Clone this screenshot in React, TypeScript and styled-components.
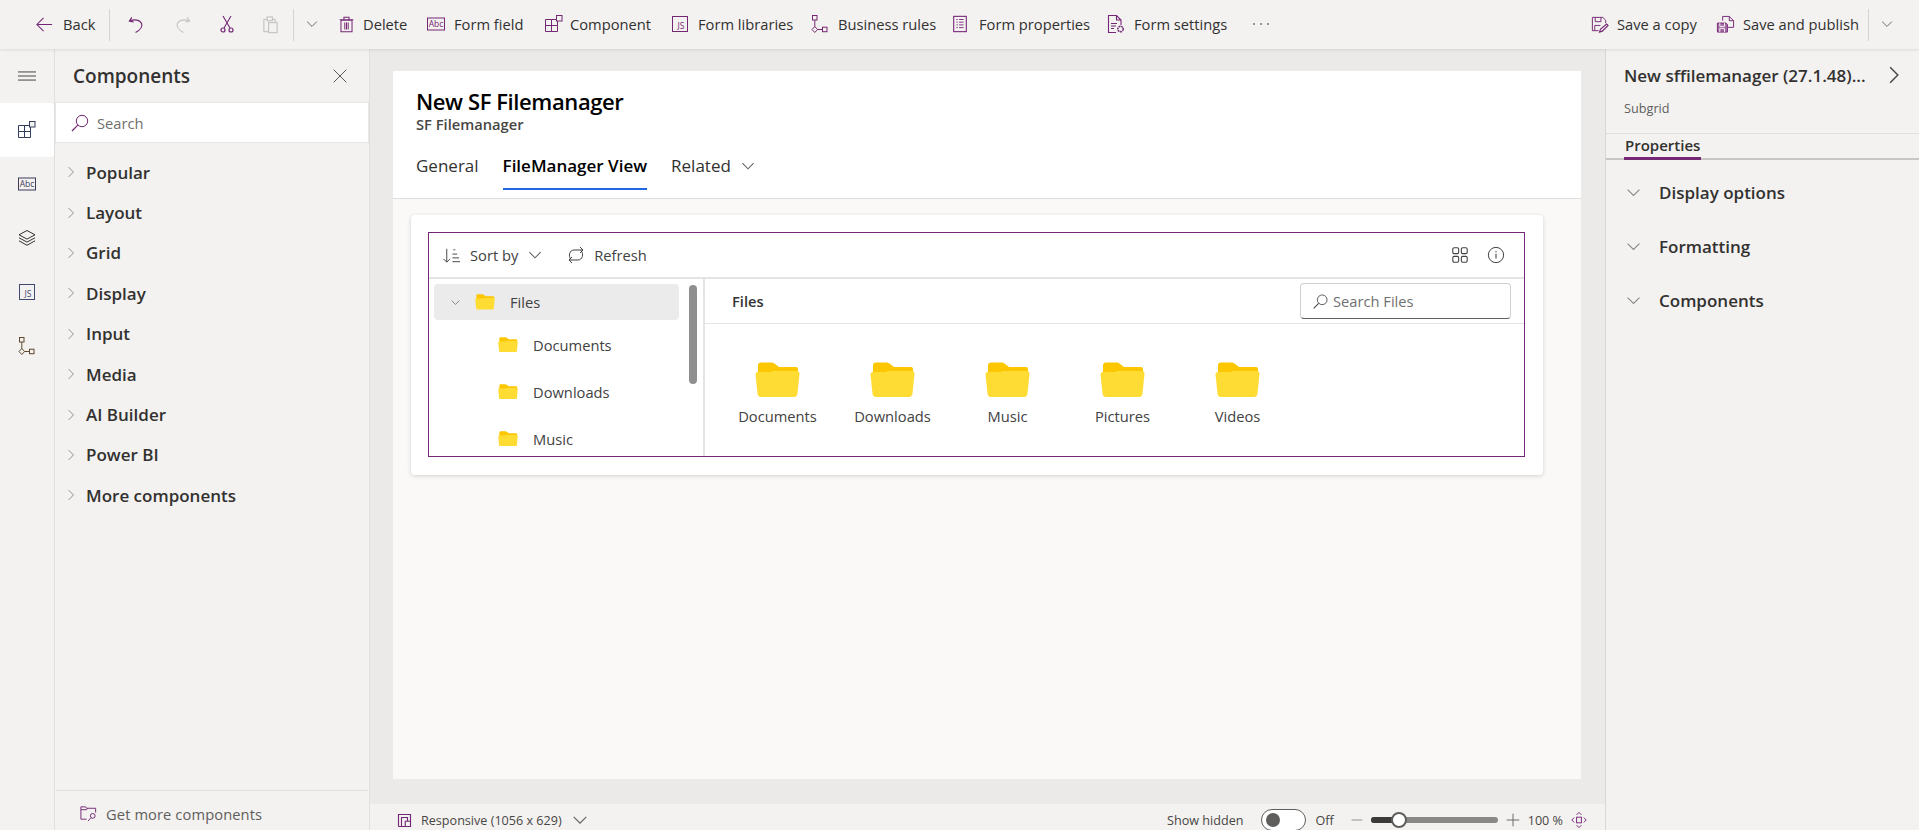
import styled, { createGlobalStyle } from 'styled-components';
import type { ReactNode } from 'react';

const PURPLE = '#742774';
const INK = '#323130';

const GlobalStyle = createGlobalStyle`
  html, body {
    margin: 0;
    padding: 0;
    overflow: hidden;
    background: #f3f2f1;
  }
  * {
    box-sizing: border-box;
  }
  body {
    font-family: 'Open Sans', 'Noto Sans', 'Liberation Sans', sans-serif;
    color: ${INK};
  }
`;

const Page = styled.div`
  display: flex;
  flex-direction: column;
  width: 1919px;
  height: 830px;
  overflow: hidden;
`;

const TopBar = styled.header`
  position: relative;
  z-index: 2;
  display: flex;
  align-items: center;
  flex: 0 0 49px;
  height: 49px;
  background: #f3f2f1;
  box-shadow: 0 1px 3px rgba(0, 0, 0, 0.1);
`;

const ToolGroup = styled.div`
  display: flex;
  align-items: center;
  height: 100%;
`;

const Tool = styled.div<{ $w: number; $pad: number; $gap: number }>`
  display: flex;
  align-items: center;
  flex: 0 0 ${p => p.$w}px;
  width: ${p => p.$w}px;
  height: 100%;
  padding: 0 0 1px ${p => p.$pad}px;
  gap: ${p => p.$gap}px;
  font-size: 14.7px;
  white-space: nowrap;
  color: ${INK};
`;

const ToolSeparator = styled.span`
  flex: 0 0 1px;
  width: 1px;
  height: 32px;
  background: #d6d4d2;
`;

const Dots = styled.span`
  display: flex;
  gap: 5px;
  i {
    width: 2px;
    height: 2px;
    border-radius: 50%;
    background: #797775;
  }
`;

const Spacer = styled.div`
  flex: 1;
`;

const Body = styled.div`
  display: flex;
  flex: 1;
  min-height: 0;
`;

const Rail = styled.nav`
  display: flex;
  flex-direction: column;
  flex: 0 0 55px;
  width: 55px;
  border-right: 1px solid #e1dfdd;
`;

const RailButton = styled.div<{ $active?: boolean }>`
  display: flex;
  align-items: center;
  justify-content: center;
  width: 54px;
  height: 54px;
  border-radius: 0 4px 4px 0;
  background: ${p => (p.$active ? '#fff' : 'transparent')};
`;

const ComponentsPanel = styled.aside`
  display: flex;
  flex-direction: column;
  flex: 0 0 315px;
  width: 315px;
  border-right: 1px solid #e1dfdd;
`;

const PanelHead = styled.div`
  display: flex;
  align-items: center;
  justify-content: space-between;
  height: 54px;
  padding: 0 21px 0 18px;
  font-size: 19px;
  font-weight: 600;
`;

const PanelSearch = styled.div`
  display: flex;
  align-items: center;
  gap: 7px;
  height: 39px;
  margin: 0 1px;
  padding-left: 14px;
  background: #fff;
  box-shadow: 0 0 0 1px #e8e6e4;
  font-size: 14.7px;
  color: #6f6e6d;
`;

const SectionList = styled.div`
  flex: 1;
  padding-top: 10px;
`;

const SectionRow = styled.div`
  display: flex;
  align-items: center;
  gap: 8px;
  height: 40.4px;
  padding-left: 9px;
  font-size: 17px;
  font-weight: 600;
`;

const PanelFoot = styled.div`
  display: flex;
  align-items: center;
  gap: 8px;
  flex: 0 0 40px;
  margin: 0 1px;
  padding: 6px 0 0 23px;
  border-top: 1px solid #e1dfdd;
  font-size: 14.7px;
  letter-spacing: 0.1px;
  color: #605e5c;
`;

const Main = styled.main`
  display: flex;
  flex-direction: column;
  flex: 1;
  min-width: 0;
  background: #ebeae9;
`;

const CanvasArea = styled.div`
  display: flex;
  flex: 1;
  min-height: 0;
  padding: 22px 24px 25px 23px;
`;

const FormSurface = styled.div`
  display: flex;
  flex-direction: column;
  flex: 1;
  background: #faf9f8;
`;

const FormHeader = styled.div`
  height: 128px;
  padding: 16px 0 0 23px;
  background: #fff;
  border-bottom: 1px solid #e1dfdd;
`;

const FormTitle = styled.h1`
  margin: 0;
  font-size: 22px;
  line-height: 28px;
  font-weight: 600;
  letter-spacing: -0.4px;
  color: #000;
`;

const FormEntity = styled.div`
  font-size: 14.7px;
  line-height: 18px;
  font-weight: 600;
  color: #484644;
`;

const FormTabs = styled.div`
  display: flex;
  align-items: flex-start;
  gap: 24px;
  margin-top: 20px;
`;

const FormTab = styled.div<{ $active?: boolean }>`
  display: flex;
  align-items: center;
  gap: 9px;
  height: 37px;
  padding-bottom: 10px;
  font-size: 17px;
  font-weight: ${p => (p.$active ? 600 : 400)};
  color: ${p => (p.$active ? '#000' : INK)};
  border-bottom: 2px solid ${p => (p.$active ? '#2266e3' : 'transparent')};
`;

const Card = styled.section`
  height: 260px;
  margin: 16px 38px 0 18px;
  padding: 17px 18px 18px 17px;
  background: #fff;
  border-radius: 4px;
  box-shadow: 0 1px 4px rgba(0, 0, 0, 0.16);
`;

const Control = styled.div`
  display: flex;
  flex-direction: column;
  height: 225px;
  border: 1px solid ${PURPLE};
  overflow: hidden;
`;

const ControlBar = styled.div`
  display: flex;
  align-items: center;
  flex: 0 0 46px;
  padding: 0 19px 0 13px;
  border-bottom: 2px solid #e4e4e4;
  font-size: 14.7px;
  color: #424242;
`;

const BarAction = styled.div<{ $gap: number; $after?: number }>`
  display: flex;
  align-items: center;
  gap: ${p => p.$gap}px;
  margin-right: ${p => p.$after ?? 0}px;
`;

const ControlBody = styled.div`
  display: flex;
  flex: 1;
  min-height: 0;
`;

const Tree = styled.div`
  position: relative;
  display: flex;
  flex-direction: column;
  flex: 0 0 276px;
  padding: 5px 0 0 5px;
  border-right: 2px solid #e4e4e4;
  font-size: 14.7px;
  color: #424242;
`;

const TreeRow = styled.div<{ $selected?: boolean }>`
  display: flex;
  align-items: center;
  flex: 0 0 ${p => (p.$selected ? 36 : 47)}px;
  width: 245px;
  margin-bottom: ${p => (p.$selected ? 1 : 0)}px;
  padding-left: ${p => (p.$selected ? 16 : 64)}px;
  border-radius: 4px;
  background: ${p => (p.$selected ? '#ebebeb' : 'transparent')};
`;

const TreeFolder = styled.span<{ $ml: number }>`
  display: flex;
  margin: 0 15px 0 ${p => p.$ml}px;
`;

const ScrollThumb = styled.div`
  position: absolute;
  top: 6px;
  left: 260px;
  width: 8px;
  height: 99px;
  border-radius: 4px;
  background: #8f8f8f;
`;

const Explorer = styled.div`
  display: flex;
  flex-direction: column;
  flex: 1;
  min-width: 0;
`;

const ExplorerHead = styled.div`
  display: flex;
  align-items: center;
  justify-content: space-between;
  flex: 0 0 45px;
  padding: 0 13px 0 27px;
  border-bottom: 1px solid #e4e4e4;
  font-size: 14.7px;
  font-weight: 600;
  color: #333;
`;

const SearchFiles = styled.div`
  display: flex;
  align-items: center;
  gap: 4px;
  width: 211px;
  height: 36px;
  padding-left: 11px;
  border: 1px solid #d1d1d1;
  border-bottom-color: #616161;
  border-radius: 4px;
  font-size: 14.7px;
  font-weight: 400;
  color: #707070;
`;

const FolderGrid = styled.div`
  display: flex;
  padding: 38px 0 0 15px;
`;

const FolderTile = styled.div`
  display: flex;
  flex-direction: column;
  align-items: center;
  gap: 10px;
  width: 115px;
  font-size: 14.7px;
  line-height: 18px;
  color: #424242;
`;

const PropsPanel = styled.aside`
  display: flex;
  flex-direction: column;
  flex: 0 0 314px;
  width: 314px;
  border-left: 1px solid #d9d7d5;
`;

const PropsHead = styled.div`
  height: 85px;
  padding: 14px 14px 0 18px;
  border-bottom: 1px solid #e1dfdd;
`;

const PropsTitle = styled.div`
  display: flex;
  align-items: center;
  justify-content: space-between;
  height: 24px;
  font-size: 17px;
  font-weight: 600;
`;

const PropsKind = styled.div`
  margin-top: 12px;
  font-size: 12.7px;
  color: #605e5c;
`;

const PropsTabs = styled.div`
  height: 26px;
  padding-left: 18px;
  border-bottom: 2px solid #c8c6c4;
`;

const PropsTab = styled.div`
  display: inline-block;
  height: 24px;
  padding: 0 1px;
  font-size: 15px;
  line-height: 18px;
  font-weight: 600;
  border-bottom: 3px solid ${PURPLE};
`;

const PropsSections = styled.div`
  padding-top: 5px;
`;

const PropsRow = styled.div`
  display: flex;
  align-items: center;
  gap: 17px;
  height: 54px;
  padding-left: 19px;
  font-size: 17px;
  font-weight: 600;
`;

const StatusBar = styled.footer`
  display: flex;
  align-items: center;
  flex: 0 0 26px;
  padding: 6px 18px 0 27px;
  background: #f3f2f1;
  font-size: 12.6px;
  color: #484644;
  overflow: hidden;
`;

const StatusItem = styled.div<{ $gap: number; $after?: number }>`
  display: flex;
  align-items: center;
  gap: ${p => p.$gap}px;
  margin-right: ${p => p.$after ?? 0}px;
`;

const Toggle = styled.span`
  display: flex;
  align-items: center;
  width: 45px;
  height: 22px;
  padding-left: 4px;
  border: 1px solid #605e5c;
  border-radius: 11px;
  background: #fff;
  i {
    width: 14px;
    height: 14px;
    border-radius: 50%;
    background: #605e5c;
  }
`;

const ZoomTrack = styled.span`
  position: relative;
  display: block;
  width: 127px;
  height: 6px;
  border-radius: 3px;
  background: #8a8886;
`;

const ZoomFill = styled.span`
  position: absolute;
  left: 0;
  top: 0;
  width: 28px;
  height: 6px;
  border-radius: 3px 0 0 3px;
  background: #3b3a39;
`;

const ZoomThumb = styled.span`
  position: absolute;
  left: 20px;
  top: -5px;
  width: 16px;
  height: 16px;
  border: 2px solid #605e5c;
  border-radius: 50%;
  background: #fff;
`;

interface IconProps {
  size?: number;
  color?: string;
  children: ReactNode;
}

const Svg = ({ size = 20, color = INK, children }: IconProps) => (
  <svg
    width={size}
    height={size}
    viewBox="0 0 20 20"
    fill="none"
    stroke={color}
    strokeWidth="1"
    style={{ flex: 'none', display: 'block' }}
  >
    {children}
  </svg>
);

const Chevron = ({ dir, size = 14, color = '#605e5c' }: { dir: 'down' | 'right'; size?: number; color?: string }) => (
  <Svg size={size} color={color}>
    {dir === 'down' ? <path d="M3 6.5l7 7 7-7" strokeWidth="1.3" /> : <path d="M6.5 3l7 7-7 7" strokeWidth="1.3" />}
  </Svg>
);

const AbcIcon = ({ color = PURPLE, size = 20 }: { color?: string; size?: number }) => (
  <Svg size={size} color={color}>
    <rect x="1.5" y="4" width="17" height="12" />
    <text x="10" y="12.8" fontSize="8.5" textAnchor="middle" fill={color} stroke="none" fontFamily="Open Sans, sans-serif">
      Abc
    </text>
  </Svg>
);

const ComponentIcon = ({ color = PURPLE, size = 20 }: { color?: string; size?: number }) => (
  <Svg size={size} color={color}>
    <path d="M1.5 5.5h6v6h-6zM7.5 11.5h6v6h-6zM1.5 11.5h6v6h-6zM7.5 5.5h6v6h-6z" />
    <rect x="12.5" y="1.5" width="5.5" height="5.5" fill="#f3f2f1" />
  </Svg>
);

const JsIcon = ({ color = PURPLE, size = 20 }: { color?: string; size?: number }) => (
  <Svg size={size} color={color}>
    <rect x="2.5" y="2.5" width="15" height="15" />
    <text x="11" y="15.2" fontSize="8.5" textAnchor="middle" fill={color} stroke="none" fontFamily="Open Sans, sans-serif">
      JS
    </text>
  </Svg>
);

const RulesIcon = ({ color = PURPLE, size = 20 }: { color?: string; size?: number }) => (
  <Svg size={size} color={color}>
    <rect x="2.5" y="1.5" width="4.5" height="4.5" />
    <path d="M4.8 6v6.5M7.5 15.5h5" />
    <path d="M4.8 12.5l2.8 3-2.8 3-2.8-3z" />
    <rect x="12.5" y="13.2" width="4.5" height="4.5" />
  </Svg>
);

const LayersIcon = () => (
  <Svg size={20}>
    <path d="M10 2.5l8 4.3-8 4.3-8-4.3z" />
    <path d="M2 9.8l8 4.3 8-4.3M2 12.8l8 4.5 8-4.5" />
  </Svg>
);

const MagnifierIcon = ({ color = PURPLE, size = 20 }: { color?: string; size?: number }) => (
  <Svg size={size} color={color}>
    <circle cx="12" cy="8" r="5.7" />
    <path d="M7.8 12.2L2 18" strokeWidth="1.2" />
  </Svg>
);

const Folder = ({ width = 20 }: { width?: number }) => (
  <svg width={width} height={(width * 35) / 45} viewBox="0 0 45 35" style={{ flex: 'none', display: 'block' }}>
    <path d="M3 3.5a3 3 0 0 1 3-3h10c2 0 3 .6 4.5 1.8L24 5h17a2 2 0 0 1 2 2v6H3z" fill="#fcc600" />
    <path
      d="M.5 12.5c0-1.5 1-2.5 2.5-2.5h11.5c1.2 0 2-.3 3-1h24.5c1.5 0 2.7 1.2 2.5 3l-2 19.5c-.2 2-1.5 3.5-3.5 3.5H6c-2 0-3.3-1.5-3.5-3.5z"
      fill="#ffdc34"
    />
  </svg>
);

const mainTools: { w: number; gap: number; label: string; icon: ReactNode }[] = [
  {
    w: 88,
    gap: 8,
    label: 'Delete',
    icon: (
      <Svg size={17} color={PURPLE}>
        <path d="M3.5 5h13v13.5h-13zM2 4.5h16M7 4.5V1.5h6v3M8 7.5v8.5M10 7.5v8.5M12 7.5v8.5" strokeWidth="1.2" />
      </Svg>
    ),
  },
  { w: 118, gap: 8, label: 'Form field', icon: <AbcIcon /> },
  { w: 126, gap: 6, label: 'Component', icon: <ComponentIcon /> },
  { w: 140, gap: 8, label: 'Form libraries', icon: <JsIcon /> },
  { w: 141, gap: 8, label: 'Business rules', icon: <RulesIcon /> },
  {
    w: 155,
    gap: 10,
    label: 'Form properties',
    icon: (
      <Svg size={18} color={PURPLE}>
        <rect x="3" y="1.5" width="14" height="17" strokeWidth="1.2" />
        <path d="M6 5h1.5M9 5h5M6 8h1.5M9 8h5M6 11h1.5M9 11h5M6 14h1.5M9 14h5" />
      </Svg>
    ),
  },
  {
    w: 147,
    gap: 8,
    label: 'Form settings',
    icon: (
      <Svg size={20} color={PURPLE}>
        <path d="M10 18.5H2.5v-17h8l4.5 4.5v5M10.5 1.5V6H15" strokeWidth="1.1" />
        <path d="M5 9.5h6M5 12h5M5 14.5h3" />
        <circle cx="14.5" cy="15" r="2.7" strokeWidth="1.5" strokeDasharray="2 .6" />
      </Svg>
    ),
  },
];

const sections = ['Popular', 'Layout', 'Grid', 'Display', 'Input', 'Media', 'AI Builder', 'Power BI', 'More components'];
const folders = ['Documents', 'Downloads', 'Music', 'Pictures', 'Videos'];

const App = () => (
  <>
    <GlobalStyle />
    <Page>
      <TopBar>
        <ToolGroup>
          <Tool $w={109} $pad={35} $gap={9}>
            <Svg size={19} color={PURPLE}>
              <path d="M18 10H2M9 3l-7 7 7 7" strokeWidth="1.1" />
            </Svg>
            Back
          </Tool>
          <ToolSeparator />
          <Tool $w={45} $pad={17} $gap={0}>
            <Svg size={19} color={PURPLE}>
              <path d="M5 2.5L2.5 6.5l4.5.8M3 6.5c4-2.5 11-1.5 12.5 3 1 3.500-2 6.500-6.500 9" strokeWidth="1.2" />
            </Svg>
          </Tool>
          <Tool $w={52} $pad={18} $gap={0}>
            <Svg size={19} color="#c8c6c4">
              <path d="M15 2.5l2.5 4-4.500.8M17 6.500c-4-2.500-11-1.500-12.500 3-1 3.500 2 6.500 6.500 9" strokeWidth="1.2" />
            </Svg>
          </Tool>
          <Tool $w={45} $pad={10} $gap={0}>
            <Svg size={20} color={PURPLE}>
              <path d="M6 2l7 12M14 2L7 14" strokeWidth="1.1" />
              <circle cx="6" cy="16" r="2" strokeWidth="1.2" />
              <circle cx="14" cy="16" r="2" strokeWidth="1.2" />
            </Svg>
          </Tool>
          <Tool $w={41} $pad={9} $gap={0}>
            <Svg size={19} color="#c8c6c4">
              <path d="M3 4.5h3.5M12 4.5h3V8M3 4.5v13h5" strokeWidth="1.3" />
              <rect x="6.5" y="2" width="5.5" height="4" strokeWidth="1.3" />
              <rect x="8" y="8" width="9" height="10.5" strokeWidth="1.3" />
            </Svg>
          </Tool>
          <ToolSeparator />
          <Tool $w={44} $pad={11} $gap={0}>
            <Chevron dir="down" />
          </Tool>
          {mainTools.map(t => (
            <Tool key={t.label} $w={t.w} $pad={0} $gap={t.gap}>
              {t.icon}
              {t.label}
            </Tool>
          ))}
          <Tool $w={40} $pad={0} $gap={0}>
            <Dots>
              <i />
              <i />
              <i />
            </Dots>
          </Tool>
        </ToolGroup>
        <Spacer />
        <ToolGroup>
          <Tool $w={126} $pad={0} $gap={8}>
            <Svg size={19} color={PURPLE}>
              <path d="M9 16.5H2.5v-14h11l3 3v3" />
              <path d="M5.5 2.5V7h6V2.5M5 16v-5h6" />
              <path d="M10 18l1-3 6.5-5.5 1.5 1.500-6 6z" strokeWidth="1.2" />
            </Svg>
            Save a copy
          </Tool>
          <Tool $w={152} $pad={0} $gap={8}>
            <Svg size={19} color={PURPLE}>
              <path d="M1.5 8.5h9l1.5 1.5v8H1.5z" fill="#a56ba5" />
              <path d="M4 8.5V12h5V8.5M4 18v-4h5v4" stroke="#f3f2f1" />
              <path d="M7 6V1.5h7L18.5 6v7H12.5M14 1.5V6h4.5" />
            </Svg>
            Save and publish
          </Tool>
          <ToolSeparator />
          <Tool $w={50} $pad={11} $gap={0}>
            <Chevron dir="down" />
          </Tool>
        </ToolGroup>
      </TopBar>
      <Body>
        <Rail>
          <RailButton>
            <Svg size={18}>
              <path d="M0 5.5h20M0 10h20M0 14.5h20" />
            </Svg>
          </RailButton>
          <RailButton $active>
            <ComponentIcon color="#323c5c" />
          </RailButton>
          <RailButton>
            <AbcIcon color="#3f3a5c" />
          </RailButton>
          <RailButton>
            <LayersIcon />
          </RailButton>
          <RailButton>
            <JsIcon color="#3f4a6c" />
          </RailButton>
          <RailButton>
            <RulesIcon color="#5c4a2c" />
          </RailButton>
        </Rail>
        <ComponentsPanel>
          <PanelHead>
            Components
            <Svg size={16}>
              <path d="M2 2l16 16M18 2L2 18" />
            </Svg>
          </PanelHead>
          <PanelSearch>
            <MagnifierIcon size={20} />
            Search
          </PanelSearch>
          <SectionList>
            {sections.map(s => (
              <SectionRow key={s}>
                <Chevron dir="right" color="#8a8886" />
                {s}
              </SectionRow>
            ))}
          </SectionList>
          <PanelFoot>
            <Svg size={19} color={PURPLE}>
              <path d="M8 16H2V3h5l1 1.5h9.5V9M2 6h6l1-1.5" />
              <circle cx="14.5" cy="12.5" r="2.5" />
              <path d="M12.5 14.5L9.5 18" />
            </Svg>
            Get more components
          </PanelFoot>
        </ComponentsPanel>
        <Main>
          <CanvasArea>
            <FormSurface>
              <FormHeader>
                <FormTitle>New SF Filemanager</FormTitle>
                <FormEntity>SF Filemanager</FormEntity>
                <FormTabs>
                  <FormTab>General</FormTab>
                  <FormTab $active>FileManager View</FormTab>
                  <FormTab>
                    Related
                    <Chevron dir="down" size={16} />
                  </FormTab>
                </FormTabs>
              </FormHeader>
              <Card>
                <Control>
                  <ControlBar>
                    <BarAction $gap={9} $after={23}>
                      <Svg size={19} color="#424242">
                        <path d="M5 3v14M1.5 13.5L5 17l3.5-3.5M12 4h2M11 8.5h5M11 12.5h7M11 16.5h8" />
                      </Svg>
                      Sort by
                      <Chevron dir="down" size={16} />
                    </BarAction>
                    <BarAction $gap={8}>
                      <Svg size={20} color="#424242">
                        <path d="M5 14.5C2 11 3.5 5 8 5h9M14 2l3 3-3 3M15 5.500c3 3.500 1.500 9.500-3 9.500H3M6 18l-3-3 3-3" />
                      </Svg>
                      Refresh
                    </BarAction>
                    <Spacer />
                    <BarAction $gap={18}>
                      <Svg size={18} color="#424242">
                        <rect x="2" y="2" width="6.5" height="6.5" rx="1.5" strokeWidth="1.2" />
                        <rect x="11.5" y="2" width="6.5" height="6.5" rx="1.5" strokeWidth="1.2" />
                        <rect x="2" y="11.5" width="6.5" height="6.5" rx="1.5" strokeWidth="1.2" />
                        <rect x="11.5" y="11.5" width="6.5" height="6.5" rx="1.5" strokeWidth="1.2" />
                      </Svg>
                      <Svg size={18} color="#424242">
                        <circle cx="10" cy="10" r="8.5" strokeWidth="1.1" />
                        <path d="M10 8.5V14M10 5.5V7" strokeWidth="1.2" />
                      </Svg>
                    </BarAction>
                  </ControlBar>
                  <ControlBody>
                    <Tree>
                      <TreeRow $selected>
                        <Chevron dir="down" size={11} color="#616161" />
                        <TreeFolder $ml={14}>
                          <Folder />
                        </TreeFolder>
                        Files
                      </TreeRow>
                      {folders.slice(0, 3).map(f => (
                        <TreeRow key={f}>
                          <TreeFolder $ml={0}>
                            <Folder />
                          </TreeFolder>
                          {f}
                        </TreeRow>
                      ))}
                      <ScrollThumb />
                    </Tree>
                    <Explorer>
                      <ExplorerHead>
                        Files
                        <SearchFiles>
                          <MagnifierIcon size={17} color="#424242" />
                          Search Files
                        </SearchFiles>
                      </ExplorerHead>
                      <FolderGrid>
                        {folders.map(f => (
                          <FolderTile key={f}>
                            <Folder width={45} />
                            {f}
                          </FolderTile>
                        ))}
                      </FolderGrid>
                    </Explorer>
                  </ControlBody>
                </Control>
              </Card>
            </FormSurface>
          </CanvasArea>
          <StatusBar>
            <StatusItem $gap={9}>
              <Svg size={15} color={PURPLE}>
                <path d="M2 18V2h16v9M18 18V11h-7v7zM2 18h16M6 18V6h8v5" strokeWidth="1.5" />
              </Svg>
              Responsive (1056 x 629)
              <Chevron dir="down" size={18} />
            </StatusItem>
            <Spacer />
            <StatusItem $gap={18} $after={9}>
              Show hidden
              <Toggle>
                <i />
              </Toggle>
            </StatusItem>
            <StatusItem $gap={9} $after={17}>
              Off
            </StatusItem>
            <StatusItem $gap={8}>
              <Svg size={12} color="#8a8886">
                <path d="M1 10h18" strokeWidth="1.5" />
              </Svg>
              <ZoomTrack>
                <ZoomFill />
                <ZoomThumb />
              </ZoomTrack>
              <Svg size={14} color="#605e5c">
                <path d="M1 10h18M10 1v18" strokeWidth="1.3" />
              </Svg>
              <span>100 %</span>
              <Svg size={16} color={PURPLE}>
                <rect x="7" y="6.5" width="6" height="7" strokeWidth="1.2" />
                <path d="M4 7l-3 3 3 3M16 7l3 3-3 3M7 3.5l3-3 3 3M7 16.5l3 3 3-3" strokeWidth="1.2" />
              </Svg>
            </StatusItem>
          </StatusBar>
        </Main>
        <PropsPanel>
          <PropsHead>
            <PropsTitle>
              New sffilemanager (27.1.48)...
              <Chevron dir="right" size={22} color="#484644" />
            </PropsTitle>
            <PropsKind>Subgrid</PropsKind>
          </PropsHead>
          <PropsTabs>
            <PropsTab>Properties</PropsTab>
          </PropsTabs>
          <PropsSections>
            {['Display options', 'Formatting', 'Components'].map(s => (
              <PropsRow key={s}>
                <Chevron dir="down" size={17} color="#8a8886" />
                {s}
              </PropsRow>
            ))}
          </PropsSections>
        </PropsPanel>
      </Body>
    </Page>
  </>
);

export default App;
